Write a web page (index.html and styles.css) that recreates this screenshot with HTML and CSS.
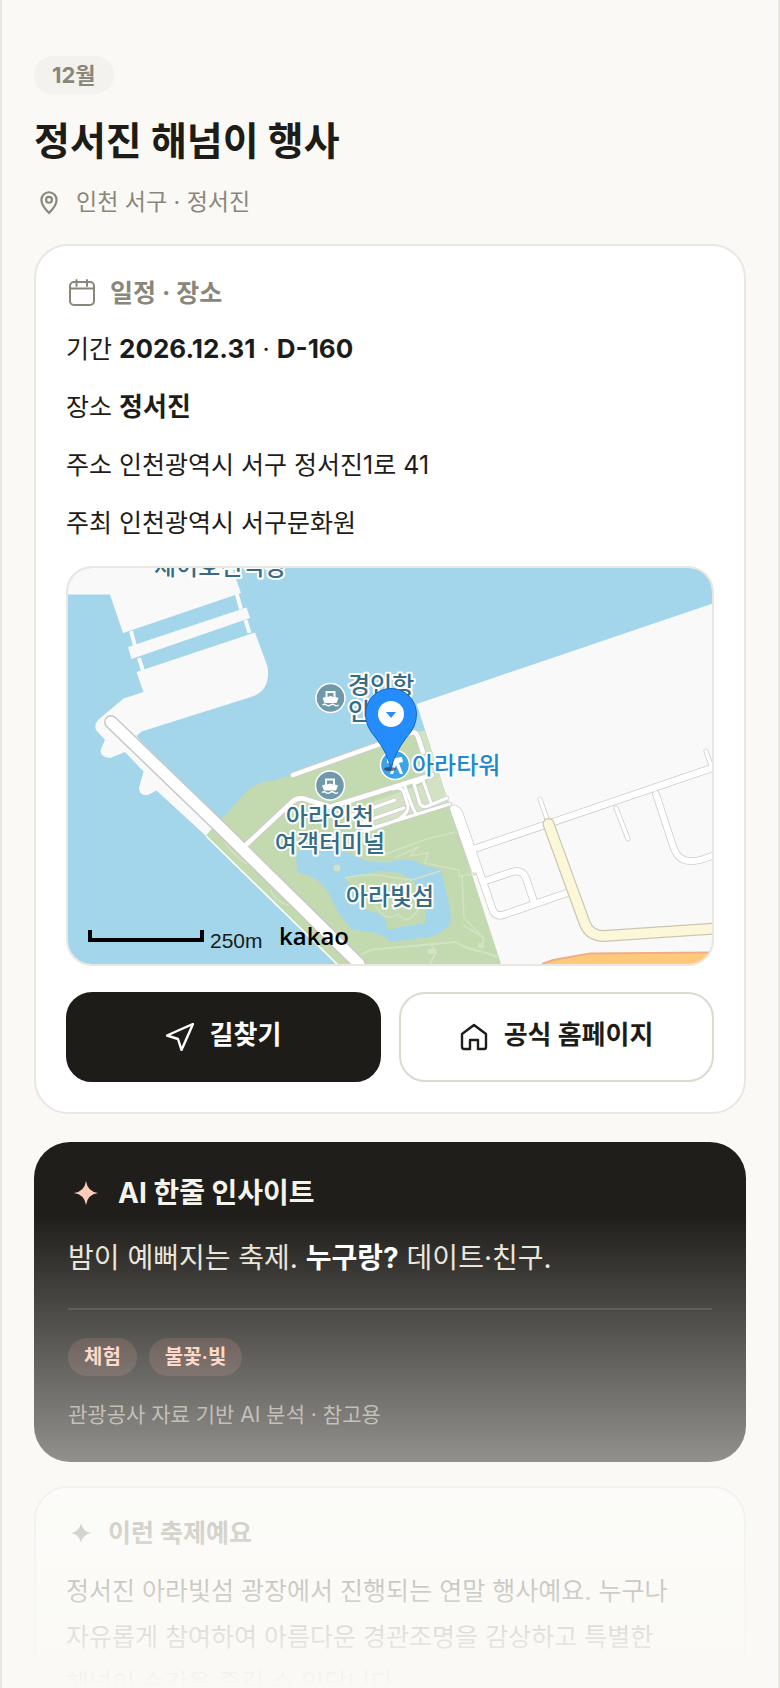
FILE: index.html
```html
<!DOCTYPE html>
<html lang="ko">
<head>
<meta charset="utf-8">
<meta name="viewport" content="width=device-width, initial-scale=1">
<title>정서진 해넘이 행사</title>
<link rel="stylesheet" href="styles.css">
</head>
<body>
<main class="preview">
  <header class="hero">
    <span class="month">12월</span>
    <h1 class="title">정서진 해넘이 행사</h1>
    <p class="place">
      <svg class="icon-pin" viewBox="0 0 24 24" aria-hidden="true"><path d="M12 22s-7-6.400-7-12a7 7 0 0 1 14 0c0 5.600-7 12-7 12z"/><circle cx="12" cy="10" r="2.700"/></svg>
      <span>인천 서구 · 정서진</span>
    </p>
  </header>

  <section class="card">
    <h2 class="card-title">
      <svg class="icon-calendar" viewBox="-2 -2 32 32" aria-hidden="true"><rect x="2" y="3" width="24" height="23" rx="4"/><path d="M2 9.500h24M8.500 1v6M19 1v6"/></svg>
      <span>일정 · 장소</span>
    </h2>
    <div class="facts">
      <p>기간 <strong>2026.12.31</strong> · <strong>D-160</strong></p>
      <p>장소 <strong>정서진</strong></p>
      <p>주소 인천광역시 서구 정서진1로 41</p>
      <p>주최 인천광역시 서구문화원</p>
    </div>

    <div class="map">
      <svg viewBox="68 568 644 396" preserveAspectRatio="xMidYMid slice" role="img" aria-label="정서진 지도">
        <defs>
          <g id="ferry">
            <circle r="14.500" fill="#7098ab" stroke="#fff" stroke-width="1.500"/>
            <path d="M-5-7H5V-1L8 0 6 5H-6L-8 0-5-1Z" fill="#fff"/>
            <path d="M-3-5H3V-1L0-2-3-1Z" fill="#7098ab"/>
            <path d="M-8 7q2-1.500 4 0t4 0 4 0 4 0" fill="none" stroke="#fff" stroke-width="1.500"/>
          </g>
        </defs>
        <rect x="68" y="568" width="644" height="396" fill="#a3d6eb"/>
        <g fill="#f9f9f9">
          <path d="M68 568H232L241 593 129 631 123 633 110 594.500H68Z"/>
          <path d="M128 647 246.500 607.500 250 618 131.500 659Z"/>
          <path d="M136.500 672 255 632.500 267.500 666.500Q271 690 252.500 696.500L141.500 731.500 136.500 736 212.500 828 206 836 156.500 790.500 148 795Q139 796 139 788L143.500 771.500 125 752 110 758Q99 757 101 749L105 740 96 730Q94 724 98 720L123.500 698.500 143.500 692Z"/>
          <path d="M712 603.700 416.700 704 500.500 964H712Z"/>
        </g>
        <path d="M131 631 135 646M236.500 593 241 609M139 658 143 671M245.500 620 249.500 633" stroke="#f9f9f9" stroke-width="4"/>

        <path d="M206 836 246.500 791.500Q258 781 273 780.500L293 775 415 732 425 730.500 501 964H337Z" fill="#c3d9b0"/>
        <path d="M415 732 425 730.500 447 798 430 795Z" fill="#d2e2c3"/>
        <path d="M206 836 337 964" stroke="#fff" stroke-width="1.500"/>
        <path d="M296 852 310 847 350 853Q366 864 390 862 408 856 423 865L441 870 450.500 910V923Q446 932 430 937L390 942Q384 934 370 932L353 930Q343 920 337 910L327 890Q318 879 308 875L297 872Z" fill="#a3d6eb"/>
        <path d="M345 878 380 871 400 873 413 880 418 889 427 896 425 923 400 927 388 930 385 918 377 913Q362 910 358 899Z" fill="#c3d9b0"/>
        <circle cx="337" cy="868" r="3.500" fill="#d2e2c3"/>
        <g fill="none" stroke="#d2e2c3" stroke-width="1.500">
          <path d="M380 856 427 839 455 832M395 858 418 847 410 856 428 853 425 863 459 870 459 876 478 874M462 876 464 918 484 938 482 945M484 938 463 925"/>
          <path d="M345 878Q372 872 390 877L412 880 440 871M372 900Q378 882 390 884T412 890M375 905Q385 923 398 914 408 926 418 910T404 895"/>
          <path d="M358 958Q366 949 380 949L455 942Q470 950 480 951L498 957M430 944 436 952 430 964" stroke-width="2"/>
          <path d="M225 842Q235 858 248 864M270 890Q276 902 290 906"/>
        </g>
        <path d="M428 949h8v5h-8zM478 943h6v5h-6z" fill="#d2e2c3"/>
        <path d="M344 812 440 778 450 804 366 832Z" fill="#d2e2c3"/>

        <g fill="none" stroke="#ccc" stroke-linejoin="round" stroke-linecap="round">
          <path d="M293 775 411 733Q416 731 418 737L423 752M247 844 292 802Q299 796 308 800L330 807 432 775" stroke-width="6.500"/>
          <path d="M353 834 450 804M350 816 395 800M358 824 404 808M366 831 406 817M393 789Q402 786 404 793L408 806Q409 812 400 818M404 784 412 806 416 814M414 784 420 804Q423 808 428 806L447 798M414 784 423 780 431 803" stroke-width="4.500"/>
          <path d="M455 809Q459 811 461 818L493 911Q497 918 506 914L567 893M474 849 712 768M485 881 512 872Q522 869 526 878L534 902" stroke-width="8"/>
          <path d="M454 809 475 869" stroke-width="9"/>
          <path d="M656 794 672 843Q677 862 692 861 700 861 712 856" stroke-width="7.500"/>
          <path d="M540 799 548 822M616 808 628 839M706 751 712 768" stroke-width="5"/>
          <path d="M111 722 222 829 359 964" stroke-width="14" stroke="#c8c8c8"/>
        </g>
        <g fill="none" stroke="#fff" stroke-linejoin="round" stroke-linecap="round">
          <path d="M293 775 411 733Q416 731 418 737L423 752M247 844 292 802Q299 796 308 800L330 807 432 775" stroke-width="4.500"/>
          <path d="M353 834 450 804M350 816 395 800M358 824 404 808M366 831 406 817M393 789Q402 786 404 793L408 806Q409 812 400 818M404 784 412 806 416 814M414 784 420 804Q423 808 428 806L447 798M414 784 423 780 431 803" stroke-width="3"/>
          <path d="M455 809Q459 811 461 818L493 911Q497 918 506 914L567 893M474 849 712 768M485 881 512 872Q522 869 526 878L534 902" stroke-width="6.500"/>
          <path d="M454 809 475 869" stroke-width="7.500"/>
          <path d="M656 794 672 843Q677 862 692 861 700 861 712 856" stroke-width="6"/>
          <path d="M540 799 548 822M616 808 628 839M706 751 712 768" stroke-width="3.500"/>
          <path d="M111 722 222 829 359 964" stroke-width="11"/>
        </g>
        <g fill="none" stroke-linecap="round">
          <path d="M548.500 824 585 924Q590 936 604 936L725 928" stroke="#cbc6b3" stroke-width="12"/>
          <path d="M548.500 824 585 924Q590 936 604 936L725 928" stroke="#fcf7d8" stroke-width="9.500"/>
        </g>
        <path d="M542 964 553 960 590 953.500 712 952.500V964Z" fill="#ffc97b"/>
        <path d="M542 964 553 960 590 953.500 712 952.500" fill="none" stroke="#f0ae86" stroke-width="2"/>

        <use href="#ferry" x="330.500" y="698"/>
        <use href="#ferry" x="330" y="785.500"/>
        <circle cx="395" cy="765" r="14.500" fill="#3ba3e6" stroke="#fff" stroke-width="1.500"/>
        <path d="M387 759 402 757 403 762 399 763 403 774H400L396 765 393 774H390L393 764 387 763Z" fill="#fff"/>
        <g class="map-label">
          <text x="348" y="694">경인항</text>
          <text x="348" y="720">인천</text>
          <text x="154" y="575">제이호선석장</text>
          <text x="330" y="825" text-anchor="middle">아라인천</text>
          <text x="330" y="852" text-anchor="middle">여객터미널</text>
          <text x="390" y="905" text-anchor="middle">아라빛섬</text>
          <text class="map-label-blue" x="412" y="774">아라타워</text>
        </g>
        <ellipse cx="390" cy="769" rx="6" ry="2" fill="#223" opacity=".6"/>
        <path d="M391 769Q388 754 376 738 365.500 727 365.500 714A25.500 25.500 0 0 1 416.500 714Q416.500 727 406 738 394 754 391 769Z" fill="#258cfb" stroke="#1564c8" stroke-width="1"/>
        <circle cx="391" cy="714" r="13" fill="#fff"/>
        <path d="M386 712H396L391 718Z" fill="#258cfb"/>
        <path d="M90 930V940H202V930" fill="none" stroke="#000" stroke-width="4"/>
        <text class="map-scale" x="210" y="948">250m</text>
        <text class="map-logo" x="279" y="945">kakao</text>
      </svg>
    </div>

    <div class="actions">
      <button class="btn btn-dark" type="button">
        <svg class="icon-btn" viewBox="0 0 28 28" aria-hidden="true"><path d="M27 1 1 12.500 12 16 15.500 27Z"/></svg>
        <span>길찾기</span>
      </button>
      <a class="btn btn-light" href="#">
        <svg class="icon-btn" viewBox="0 0 28 28" aria-hidden="true"><path d="M2 11 14 2 26 11V24a2 2 0 0 1-2 2H18V17H10V26H4a2 2 0 0 1-2-2Z"/></svg>
        <span>공식 홈페이지</span>
      </a>
    </div>
  </section>

  <section class="insight">
    <h2 class="insight-title">
      <svg class="icon-star" viewBox="0 0 36 36" aria-hidden="true"><path d="M18 6Q19.500 16.500 30 18 19.500 19.500 18 30 16.500 19.500 6 18 16.500 16.500 18 6Z"/></svg>
      <span>AI 한줄 인사이트</span>
    </h2>
    <p class="insight-text">밤이 예뻐지는 축제. <strong>누구랑?</strong> 데이트·친구.</p>
    <div class="insight-foot">
      <ul class="tags"><li>체험</li><li>불꽃·빛</li></ul>
      <p class="source">관광공사 자료 기반 AI 분석 · 참고용</p>
    </div>
  </section>

  <section class="card about">
    <h2 class="card-title">
      <svg class="icon-star-small" viewBox="0 0 30 30" aria-hidden="true"><path d="M15 5Q16.500 13.500 25 15 16.500 16.500 15 25 13.500 16.500 5 15 13.500 13.500 15 5Z"/></svg>
      <span>이런 축제예요</span>
    </h2>
    <p class="about-text">정서진 아라빛섬 광장에서 진행되는 연말 행사예요. 누구나 자유롭게 참여하여 아름다운 경관조명을 감상하고 특별한 해넘이 순간을 즐길 수 있답니다.</p>
  </section>
</main>
</body>
</html>
```
FILE: styles.css
```css
* {
  box-sizing: border-box;
}

body {
  margin: 0;
  background: #faf9f5;
  color: #1e1c18;
  font-family: Inter, "Noto Sans CJK KR", sans-serif;
  font-size: 25px;
}

h1, h2, p, ul {
  margin: 0;
  padding: 0;
}

svg {
  display: block;
  flex: none;
}

.preview {
  position: relative;
  height: 100vh;
  overflow: hidden;
  padding: 56px 32px 0;
  border: solid #e9e7e0;
  border-width: 0 2px;
}

.preview::after {
  content: "";
  position: absolute;
  inset: auto -2px 0;
  height: 28%;
  background: linear-gradient(rgba(250, 249, 245, 0), #faf9f5);
  pointer-events: none;
}

.hero {
  display: flex;
  flex-direction: column;
  align-items: flex-start;
}

.month {
  padding: 0 18px;
  border-radius: 19px;
  background: #f3f2ee;
  color: #8b867a;
  font-size: 22px;
  font-weight: 700;
  line-height: 38px;
}

.title {
  margin-top: 20px;
  font-size: 39px;
  font-weight: 700;
  line-height: 54px;
}

.place {
  display: flex;
  align-items: center;
  gap: 14px;
  margin-top: 16px;
  padding-left: 2px;
  color: #8b867a;
  font-size: 23px;
  line-height: 36px;
}

.icon-pin {
  width: 26px;
  height: 26px;
  fill: none;
  stroke: currentColor;
  stroke-width: 2;
}

.card {
  margin-top: 24px;
  padding: 30px;
  border: 2px solid #e9e7e0;
  border-radius: 34px;
  background: #fff;
}

.card-title {
  display: flex;
  align-items: center;
  gap: 12px;
  color: #8b867a;
  font-size: 25px;
  font-weight: 700;
  line-height: 34px;
}

.icon-calendar {
  width: 32px;
  height: 32px;
  fill: none;
  stroke: currentColor;
  stroke-width: 2;
  stroke-linecap: round;
}

.facts {
  display: grid;
  gap: 18px;
  margin-top: 19px;
  line-height: 40px;
}

.facts strong {
  font-size: 26px;
  font-weight: 700;
}

.map {
  margin-top: 23px;
  overflow: hidden;
  border: 2px solid #e9e7e0;
  border-radius: 26px;
}

.map svg {
  width: 100%;
  height: auto;
}

.map-label {
  fill: #356c86;
  font-size: 24px;
  font-weight: 500;
  paint-order: stroke;
  stroke: #fff;
  stroke-width: 4px;
  stroke-linejoin: round;
}

.map-label-blue {
  fill: #2089cf;
}

.map-scale {
  fill: #1a1a1a;
  font-family: "Liberation Sans", sans-serif;
  font-size: 21px;
}

.map-logo {
  font-family: "Open Sans", sans-serif;
  font-size: 24px;
  font-weight: 600;
}

.actions {
  display: grid;
  grid-template-columns: 1fr 1fr;
  gap: 18px;
  margin-top: 26px;
}

.btn {
  display: flex;
  align-items: center;
  justify-content: center;
  gap: 16px;
  height: 90px;
  padding: 0 0 4px;
  border: 2px solid #1e1c18;
  border-radius: 26px;
  font-family: inherit;
  font-size: 26px;
  font-weight: 700;
  line-height: 36px;
  text-decoration: none;
}

.btn-dark {
  background: #1e1c18;
  color: #fff;
}

.btn-light {
  border-color: #dcdad0;
  background: #fff;
  color: #1e1c18;
}

.icon-btn {
  width: 28px;
  height: 28px;
  margin-top: 4px;
  fill: none;
  stroke: currentColor;
  stroke-width: 2.4;
  stroke-linejoin: round;
}

.insight {
  margin-top: 28px;
  padding: 32px 34px;
  border-radius: 36px;
  background: #1f1e1a;
  color: #e9e4d9;
}

.insight-title {
  display: flex;
  align-items: center;
  gap: 14px;
  color: #f5f3ee;
  font-size: 28px;
  font-weight: 700;
  line-height: 38px;
}

.icon-star {
  width: 36px;
  height: 36px;
  fill: #ffcbb9;
}

.insight-text {
  margin-top: 24px;
  font-size: 28px;
  line-height: 44px;
}

.insight-text strong {
  color: #fff;
}

.insight-foot {
  margin-top: 28px;
  padding-top: 28px;
  border-top: 2px solid #393834;
}

.tags {
  display: flex;
  gap: 12px;
  list-style: none;
}

.tags li {
  padding: 0 16px;
  border-radius: 19px;
  background: #40302b;
  color: #ffcbb9;
  font-size: 20px;
  font-weight: 600;
  line-height: 38px;
}

.source {
  margin-top: 24px;
  color: #9b978c;
  font-size: 21px;
  line-height: 30px;
}

.about {
  padding-top: 28px;
}

.icon-star-small {
  width: 30px;
  height: 30px;
  fill: currentColor;
}

.about-text {
  margin-top: 18px;
  line-height: 46px;
  word-break: keep-all;
}
```
